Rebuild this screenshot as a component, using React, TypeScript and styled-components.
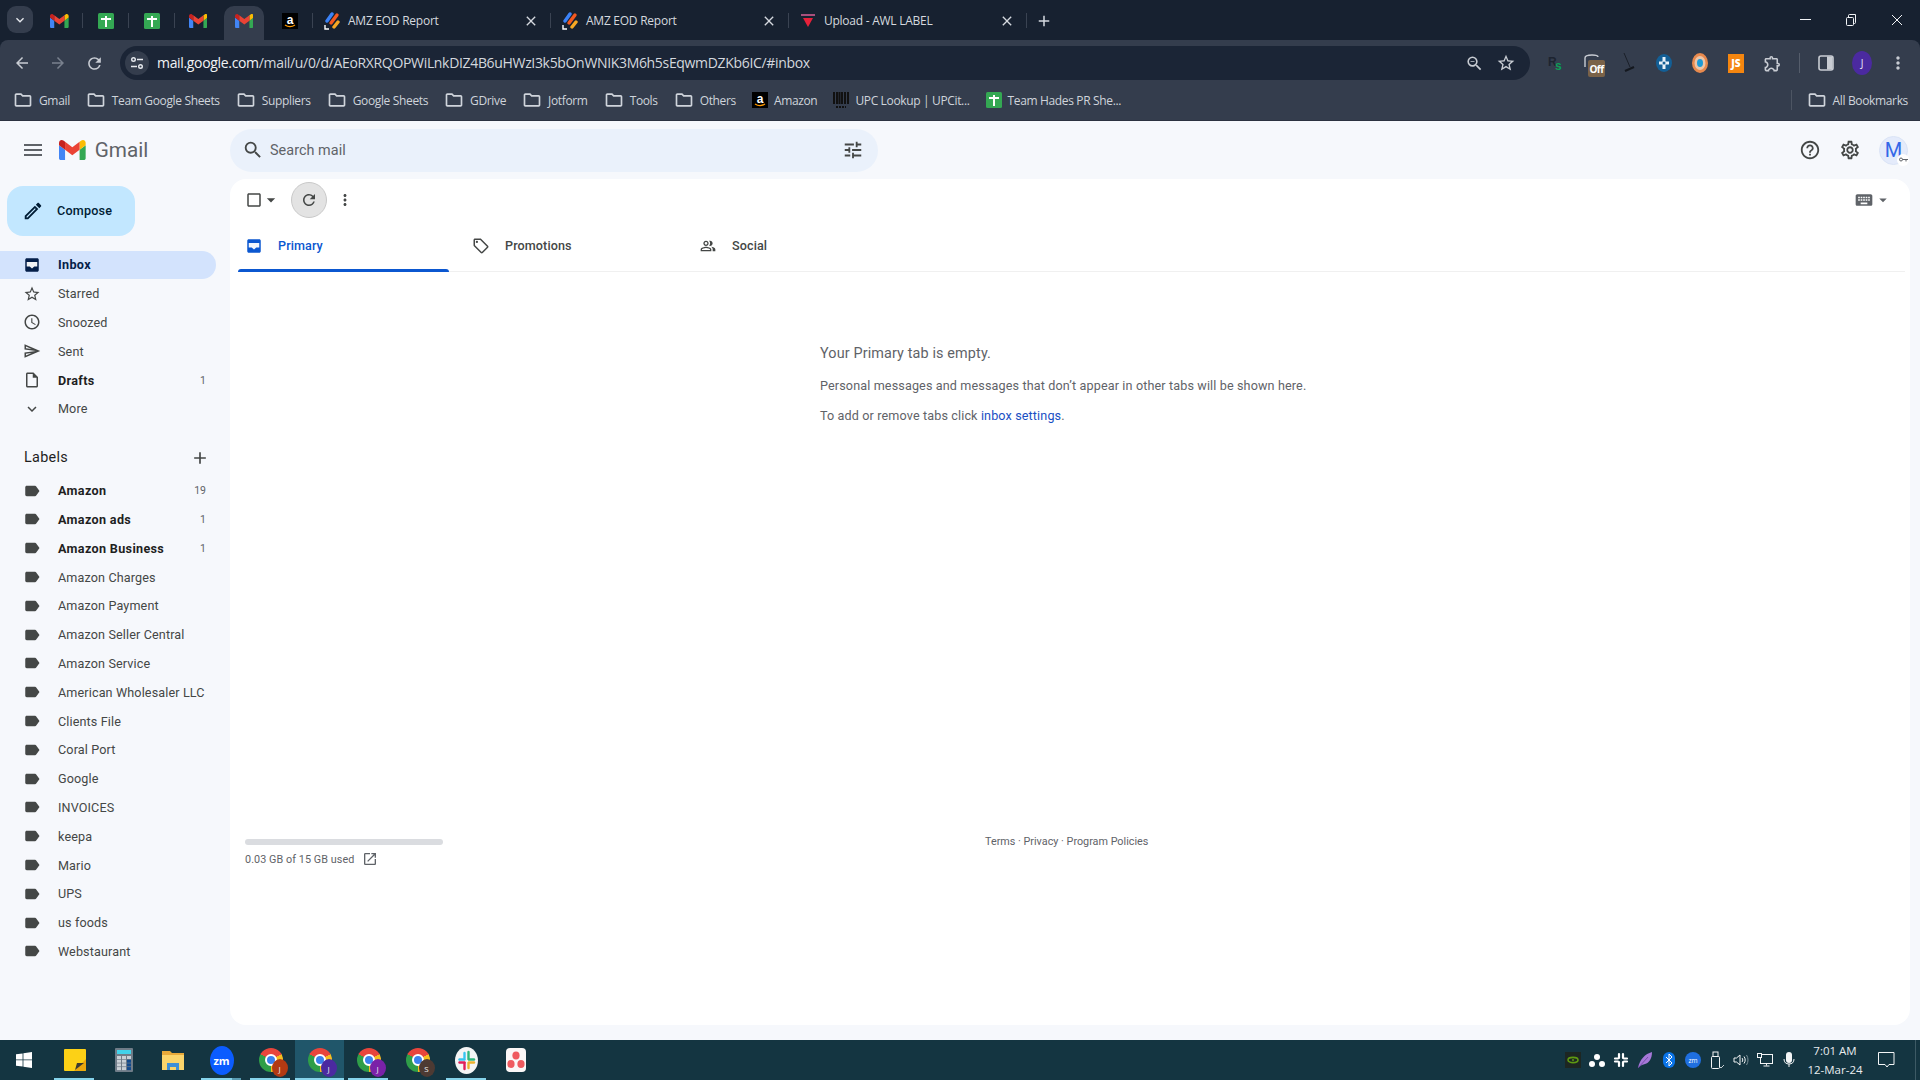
import styled, { createGlobalStyle } from 'styled-components'
import {
  MdAccessTime,
  MdAdd,
  MdArrowBack,
  MdArrowDropDown,
  MdArrowForward,
  MdCheckBoxOutlineBlank,
  MdClose,
  MdExpandMore,
  MdHelpOutline,
  MdKeyboard,
  MdLabel,
  MdMenu,
  MdMoreVert,
  MdOpenInNew,
  MdOutlineCreate,
  MdOutlineExtension,
  MdOutlineFolder,
  MdOutlineInsertDriveFile,
  MdOutlineLocalOffer,
  MdOutlinePeopleAlt,
  MdOutlineSend,
  MdOutlineSettings,
  MdRefresh,
  MdSearch,
  MdStarBorder,
  MdTune,
  MdZoomOut,
} from 'react-icons/md'

const GlobalStyle = createGlobalStyle`
  html, body {
    margin: 0;
    padding: 0;
    height: 100%;
    overflow: hidden;
    font-family: Roboto, "Liberation Sans", sans-serif;
  }
  * {
    box-sizing: border-box;
  }
`

const chromeFont = '"Open Sans", "Noto Sans", sans-serif'

const Page = styled.div`
  width: 1920px;
  height: 1080px;
  display: flex;
  flex-direction: column;
  background: #f6f8fc;
`

/* browser chrome */

const BrowserTop = styled.div`
  background: #172130;
  font-family: ${chromeFont};
`

const TabStrip = styled.div`
  height: 40px;
  display: flex;
  align-items: stretch;
`

const TabSearch = styled.div`
  width: 26px;
  height: 27px;
  margin: 6px 4px 0 7px;
  border-radius: 9px;
  background: #343d4d;
  color: #e6e9ee;
  display: flex;
  align-items: center;
  justify-content: center;
`

const PinnedTab = styled.div<{ $active?: boolean; $noSep?: boolean }>`
  position: relative;
  width: 46px;
  display: flex;
  align-items: center;
  justify-content: center;
  padding-top: 2px;
  border-right: ${({ $noSep }) => ($noSep ? 'none' : '1px solid #3a4352')};
  border-image: linear-gradient(transparent 33%, #3a4352 33%, #3a4352 70%, transparent 70%) 1;

  ${({ $active }) =>
    $active &&
    `
    &::before {
      content: '';
      position: absolute;
      left: 3px;
      right: 3px;
      top: 6px;
      bottom: 0;
      background: #343d4d;
      border-radius: 10px 10px 0 0;
    }
    > * { position: relative; }
  `}
`

const Tab = styled.div`
  width: 238px;
  display: flex;
  align-items: center;
  gap: 8px;
  padding: 1px 11px 0;
  font-size: 12px;
  letter-spacing: -0.25px;
  color: #d5d9df;
  border-right: 1px solid #3a4352;
  border-image: linear-gradient(transparent 33%, #3a4352 33%, #3a4352 70%, transparent 70%) 1;
`

const TabTitle = styled.span`
  flex: 1;
  white-space: nowrap;
`

const TabClose = styled.span`
  display: flex;
  color: #d5d9df;
`

const NewTab = styled.div`
  margin-left: 8px;
  display: flex;
  align-items: center;
  color: #d5d9df;
  padding-top: 1px;
`

const WindowControls = styled.div`
  margin-left: auto;
  display: flex;
  align-items: center;
  color: #f2f4f6;
`

const WindowButton = styled.div`
  width: 46px;
  height: 40px;
  display: flex;
  align-items: center;
  justify-content: center;
`

const Toolbar = styled.div`
  background: #343d4d;
  border-radius: 8px 8px 0 0;
`

const ToolbarRow = styled.div`
  height: 40px;
  padding: 6px 0 0 4px;
  display: flex;
  align-items: center;
`

const NavButton = styled.div<{ $dim?: boolean }>`
  width: 36px;
  display: flex;
  justify-content: center;
  color: ${({ $dim }) => ($dim ? '#79818e' : '#c8ccd3')};
`

const Omnibox = styled.div`
  width: 1410px;
  height: 34px;
  margin-left: 8px;
  padding: 0 14px 0 5px;
  border-radius: 17px;
  background: #1b2536;
  display: flex;
  align-items: center;
`

const SiteChip = styled.div`
  width: 24px;
  height: 24px;
  border-radius: 50%;
  background: #343d4d;
  color: #e6e9ee;
  display: flex;
  align-items: center;
  justify-content: center;
`

const UrlText = styled.div`
  margin: -1px 0 0 8px;
  font-size: 14px;
  letter-spacing: -0.33px;
  color: #f1f3f5;
  white-space: nowrap;

  span {
    color: #d4d8de;
  }
`

const OmniActions = styled.div`
  margin-left: auto;
  display: flex;
  align-items: center;
  gap: 12px;
  color: #c8ccd3;
`

const ExtensionRow = styled.div`
  margin-left: 8px;
  display: flex;
  align-items: center;
`

const ExtSlot = styled.div`
  position: relative;
  width: 36px;
  height: 24px;
  display: flex;
  align-items: center;
  justify-content: center;
  color: #c8ccd3;
`

const OffBadge = styled.span`
  position: absolute;
  left: 14px;
  top: 9px;
  width: 17px;
  height: 17px;
  border-radius: 2px;
  background: #7a6248;
  color: #fff;
  font-size: 10px;
  font-weight: 700;
  letter-spacing: -0.5px;
  display: flex;
  align-items: center;
  justify-content: center;
`

const JsBadge = styled.span`
  width: 16px;
  height: 19px;
  background: #f5860f;
  color: #fff;
  font-size: 10px;
  font-weight: 800;
  display: flex;
  align-items: center;
  justify-content: center;
`

const ToolbarSep = styled.div`
  width: 1px;
  height: 20px;
  margin: 0 8px 0 9px;
  background: #555d6b;
`

const ProfileChip = styled.div`
  width: 20px;
  height: 24px;
  border-radius: 50%;
  background: #4b2aa0;
  color: #e8e4f6;
  font-size: 10px;
  display: flex;
  align-items: center;
  justify-content: center;
`

const BookmarkBar = styled.div`
  height: 41px;
  padding: 0 12px 0 13px;
  display: flex;
  align-items: center;
  border-bottom: 1px solid #2b3240;
`

const Bookmark = styled.div`
  display: flex;
  align-items: center;
  gap: 6px;
  margin-right: 16px;
  font-size: 12px;
  letter-spacing: -0.35px;
  color: #cfd4db;
  white-space: nowrap;

  svg {
    flex: none;
  }
`

const BookmarkEnd = styled.div`
  margin-left: auto;
  padding-left: 15px;
  border-left: 1px solid #4d5563;
  height: 20px;
  display: flex;
  align-items: center;
  gap: 6px;
  font-size: 12px;
  letter-spacing: -0.35px;
  color: #cfd4db;
`

/* gmail */

const GmailBody = styled.div`
  flex: 1;
  min-height: 0;
  display: flex;
  flex-direction: column;
  background: #f6f8fc;
`

const GmailHeader = styled.header`
  height: 58px;
  flex: none;
  display: flex;
  align-items: center;
`

const Brand = styled.div`
  width: 230px;
  padding-left: 21px;
  display: flex;
  align-items: center;
  color: #5f6368;
`

const LogoWrap = styled.div`
  margin-left: 14px;
  display: flex;
`

const Wordmark = styled.span`
  margin-left: 9px;
  font-size: 20.7px;
  color: #5f6368;
`

const SearchBox = styled.div`
  width: 648px;
  height: 43px;
  padding: 0 14px 0 12px;
  border-radius: 22px;
  background: #eaf1fb;
  display: flex;
  align-items: center;
  color: #444746;
`

const SearchPlaceholder = styled.span`
  margin-left: 6px;
  font-size: 14.4px;
  letter-spacing: 0.05px;
  color: #5f6368;
  flex: 1;
`

const HeaderIcons = styled.div`
  margin-left: auto;
  padding-right: 12px;
  display: flex;
  align-items: center;
  color: #444746;
`

const HeaderIcon = styled.div`
  width: 40px;
  display: flex;
  justify-content: center;
`

const Account = styled.div`
  position: relative;
  width: 29px;
  height: 29px;
  margin-left: 9px;
  border-radius: 50%;
  background: #e4ebfb;
  border: 1px solid #dbe4f6;
  color: #3367e8;
  font-size: 20px;
  display: flex;
  align-items: center;
  justify-content: center;
`

const AccountKey = styled.span`
  position: absolute;
  right: -2px;
  bottom: -2px;
  width: 12px;
  height: 12px;
  border-radius: 50%;
  background: #fff;
  display: flex;
  align-items: center;
  justify-content: center;
`

const Content = styled.div`
  flex: 1;
  min-height: 0;
  display: flex;
`

const Sidebar = styled.nav`
  width: 230px;
  flex: none;
  display: flex;
  flex-direction: column;
`

const Compose = styled.div`
  width: 128px;
  height: 50px;
  margin: 7px 0 14.5px 7px;
  padding: 0 0 1px 15px;
  border-radius: 16px;
  background: #c2e7ff;
  color: #001d35;
  display: flex;
  align-items: center;
  gap: 13px;
  font-size: 12.6px;
  font-weight: 500;
  letter-spacing: 0.2px;
`

const NavRow = styled.div<{ $active?: boolean; $bold?: boolean }>`
  width: 216px;
  height: 28.8px;
  padding: 0 10px 0 23px;
  border-radius: 0 15px 15px 0;
  display: flex;
  align-items: center;
  font-size: 12.6px;
  color: ${({ $bold, $active }) => ($active ? '#041e49' : $bold ? '#1f1f1f' : '#444746')};
  font-weight: ${({ $bold, $active }) => ($bold || $active ? 700 : 400)};
  letter-spacing: ${({ $bold, $active }) => ($bold || $active ? 0.33 : 0.13)}px;
  background: ${({ $active }) => ($active ? '#d3e3fd' : 'transparent')};

  svg {
    flex: none;
    color: ${({ $active }) => ($active ? '#041e49' : '#444746')};
  }
`

const NavLabel = styled.span`
  margin-left: 17px;
  flex: 1;
  white-space: nowrap;
`

const NavCount = styled.span`
  font-size: 10.5px;
  font-weight: 400;
  letter-spacing: 0;
  color: #5f6368;
`

const LabelsHead = styled.div`
  height: 37px;
  margin-top: 16px;
  padding: 0 20px 0 24px;
  display: flex;
  align-items: center;
  justify-content: space-between;
  font-size: 14.4px;
  letter-spacing: 0.3px;
  color: #1f1f1f;
`

const Main = styled.main`
  flex: 1;
  margin: 0 10px 15px 0;
  border-radius: 16px;
  background: #fff;
  display: flex;
  flex-direction: column;
`

const ListBar = styled.div`
  height: 39px;
  padding: 3px 18px 0 15px;
  display: flex;
  align-items: center;
  color: #444746;
`

const Refresh = styled.div`
  width: 36px;
  height: 36px;
  margin: 0 9px 0 10px;
  border-radius: 50%;
  background: #e3e3e3;
  border: 1px solid #c9c9c9;
  display: flex;
  align-items: center;
  justify-content: center;
`

const Caret = styled.span`
  display: flex;
  margin-left: -2px;
`

const DotsButton = styled.span`
  display: flex;
`

const ListBarEnd = styled.div`
  margin-left: auto;
  display: flex;
  align-items: center;
  color: #5f6368;
`

const InboxTabs = styled.div`
  height: 54px;
  margin: 0 5px 0 8px;
  display: flex;
  border-bottom: 1px solid #f0f0f0;
`

const InboxTab = styled.div<{ $active?: boolean }>`
  position: relative;
  width: 211px;
  margin-right: 16px;
  padding: 2px 0 0 6px;
  display: flex;
  align-items: center;
  gap: 14px;
  font-size: 12.6px;
  font-weight: 500;
  letter-spacing: 0.1px;
  color: ${({ $active }) => ($active ? '#0b57d0' : '#444746')};

  &::after {
    content: '';
    display: ${({ $active }) => ($active ? 'block' : 'none')};
    position: absolute;
    left: 0;
    right: 0;
    bottom: -1px;
    height: 3px;
    background: #0b57d0;
    border-radius: 3px 3px 0 0;
  }
`

const InboxTabIcon = styled.span`
  width: 20px;
  display: flex;
  align-items: center;
  justify-content: center;
`

const EmptyState = styled.div`
  margin: 72px 0 0 590px;
  color: #5f6368;
  font-size: 12.6px;
  line-height: 18px;
  letter-spacing: 0.13px;
`

const EmptyTitle = styled.div`
  font-size: 14.4px;
  line-height: 20px;
`

const EmptyLine = styled.div`
  margin-top: 12.5px;

  a {
    color: #1a4fc4;
    text-decoration: none;
  }
`

const Footer = styled.footer`
  margin-top: auto;
  padding: 0 0 158px 15px;
  display: flex;
  align-items: flex-start;
`

const Storage = styled.div`
  width: 198px;
  font-size: 10.8px;
  letter-spacing: 0.07px;
  color: #5f6368;
`

const StorageBar = styled.div`
  height: 6px;
  border-radius: 3px;
  background: #dadce0;
`

const StorageText = styled.div`
  margin-top: 6px;
  display: flex;
  align-items: center;
  gap: 8px;
  color: #5f6368;
`

const FooterLinks = styled.div`
  margin: -4px 0 0 542px;
  font-size: 10.8px;
  color: #5f6368;
`

/* windows taskbar */

const Taskbar = styled.div`
  height: 40px;
  flex: none;
  background: #143541;
  display: flex;
  align-items: stretch;
  font-family: ${chromeFont};
`

const StartButton = styled.div`
  width: 40px;
  margin-right: 10px;
  padding-left: 8px;
  display: flex;
  align-items: center;
  justify-content: center;
`

const TaskCell = styled.div<{ $active?: boolean; $running?: boolean; $stacked?: boolean }>`
  position: relative;
  width: 49px;
  display: flex;
  align-items: center;
  justify-content: center;
  background: ${({ $active }) => ($active ? '#20566a' : 'transparent')};

  &::after {
    content: '';
    display: ${({ $running }) => ($running ? 'block' : 'none')};
    position: absolute;
    left: ${({ $active }) => ($active ? 0 : 4)}px;
    right: ${({ $active }) => ($active ? 0 : 5)}px;
    bottom: 0;
    height: 2px;
    background: ${({ $stacked }) =>
      $stacked ? 'linear-gradient(90deg, #86d3ea 78%, #5a9cb2 78%)' : '#86d3ea'};
  }
`

const ChromeBall = styled.div`
  position: relative;
  width: 24px;
  height: 24px;
  border-radius: 50%;
  background: conic-gradient(#e8453c 0 60deg, #f5bd1f 60deg 180deg, #2f9e48 180deg 300deg, #e8453c 300deg);

  &::after {
    content: '';
    position: absolute;
    inset: 6px;
    border-radius: 50%;
    background: #3b82ee;
    border: 2px solid #fff;
  }
`

const ProfileDot = styled.span<{ $color: string }>`
  position: absolute;
  z-index: 1;
  right: -5px;
  bottom: -5px;
  width: 16px;
  height: 18px;
  border-radius: 50%;
  background: ${({ $color }) => $color};
  color: #eee;
  font-size: 8px;
  display: flex;
  align-items: center;
  justify-content: center;
`

const ZoomApp = styled.div`
  width: 24px;
  height: 29px;
  border-radius: 50%;
  background: #0b5cff;
  color: #fff;
  font-size: 11px;
  font-weight: 700;
  display: flex;
  align-items: center;
  justify-content: center;
`

const Tray = styled.div`
  margin-left: auto;
  display: flex;
  align-items: center;
  color: #f3f5f6;
`

const TraySlot = styled.div`
  width: 24px;
  display: flex;
  align-items: center;
  justify-content: center;
`

const TrayZoom = styled.div`
  width: 16px;
  height: 16px;
  border-radius: 50%;
  background: #1f6fe0;
  color: #fff;
  font-size: 6.5px;
  display: flex;
  align-items: center;
  justify-content: center;
`

const Clock = styled.div`
  width: 68px;
  text-align: center;
  font-size: 11.5px;
  line-height: 19px;
  color: #e8ecee;
`

const NotifyButton = styled.div`
  width: 36px;
  display: flex;
  justify-content: center;
`

const ShowDesktop = styled.div`
  width: 15px;
  align-self: stretch;
  position: relative;

  &::after {
    content: '';
    position: absolute;
    right: 4px;
    top: 0;
    bottom: 0;
    width: 1px;
    background: #3d5a65;
  }
`

/* drawings */

const GmailLogo = ({ size = 14 }: { size?: number }) => (
  <svg width={size * (88 / 66)} height={size} viewBox="52 42 88 66">
    <path fill="#4285f4" d="M58 108h14V74L52 59v43c0 3.32 2.69 6 6 6" />
    <path fill="#34a853" d="M120 108h14c3.32 0 6-2.69 6-6V59l-20 15" />
    <path fill="#fbbc04" d="M120 48v26l20-15v-8c0-7.42-8.47-11.65-14.4-7.2" />
    <path fill="#ea4335" d="M72 74V48l24 18 24-18v26L96 92" />
    <path fill="#c5221f" d="M52 51v8l20 15V48l-5.6-4.2c-5.94-4.45-14.4-.22-14.4 7.2" />
  </svg>
)

const SheetIcon = () => (
  <svg width="16" height="16" viewBox="0 0 16 16">
    <rect width="16" height="16" rx="1.5" fill="#34a853" />
    <rect x="7" y="3" width="2" height="11" fill="#fff" />
    <rect x="3" y="5" width="10" height="2" fill="#fff" />
  </svg>
)

const AmazonIcon = () => (
  <svg width="16" height="16" viewBox="0 0 16 16">
    <rect width="16" height="16" fill="#000" />
    <text x="8" y="10.5" textAnchor="middle" fontSize="12" fontWeight="700" fontFamily="Liberation Sans" fill="#fff">
      a
    </text>
    <path d="M3 12c3 2 7 2 10 0" stroke="#f90" strokeWidth="1.3" fill="none" />
  </svg>
)

const AmzLogo = () => (
  <svg width="16" height="18" viewBox="0 0 16 18">
    <path d="M3 9 8 2" stroke="#3b82f6" strokeWidth="3.4" strokeLinecap="round" />
    <path d="M7 11 13 3" stroke="#f4581f" strokeWidth="3.4" strokeLinecap="round" />
    <path d="M10 15 14 10" stroke="#f7a823" strokeWidth="3.4" strokeLinecap="round" />
    <path d="M1 13v4h4" stroke="#fff" strokeWidth="1.4" fill="none" />
  </svg>
)

const UploadLogo = () => (
  <svg width="16" height="16" viewBox="0 0 16 16">
    <rect x="1" y="1" width="14" height="2" fill="#a8507c" />
    <path d="M3 5h10l-5 9z" fill="#e8213a" />
  </svg>
)

const BarcodeIcon = () => (
  <svg width="16" height="18" viewBox="0 0 16 18">
    <path d="M1 1v12M4 1v12M6.5 1v12M9 1v12M12 1v12M15 1v12" stroke="#111" strokeWidth="2" />
    <path d="M3 16h10" stroke="#111" strokeWidth="2" strokeDasharray="2 1" />
  </svg>
)

const InboxGlyph = ({ color }: { color: string }) => (
  <svg width="18" height="18" viewBox="0 0 24 24">
    <path
      fill={color}
      d="M19 3H5c-1.1 0-2 .9-2 2v14c0 1.1.9 2 2 2h14c1.1 0 2-.9 2-2V5c0-1.1-.9-2-2-2z"
    />
    <path fill="#fff" opacity="0.95" d="M5 8h14v6h-4l-3 2.500-3-2.500H5z" />
  </svg>
)

const RestoreIcon = () => (
  <svg width="12" height="12" viewBox="0 0 12 12" fill="none" stroke="#f2f4f6">
    <rect x="1.5" y="3.5" width="7" height="8" rx="1" />
    <path d="M3.5 3.5V1.5a1 1 0 0 1 1-1h6v8a1 1 0 0 1-1 1h-1" />
  </svg>
)

const SidePanelIcon = () => (
  <svg width="16" height="16" viewBox="0 0 16 16">
    <rect x="1" y="1" width="14" height="14" rx="2" fill="#343d4d" stroke="#c8ccd3" strokeWidth="1.6" />
    <rect x="9" y="1.5" width="5.5" height="13" fill="#c8ccd3" />
  </svg>
)

const RsIcon = () => (
  <svg width="18" height="16" viewBox="0 0 18 16">
    <text x="1" y="11" fontSize="12" fontWeight="700" fontFamily="Liberation Sans" fill="#1d2430">
      R
    </text>
    <text x="8" y="15" fontSize="12" fontWeight="700" fontFamily="Liberation Sans" fill="#0f9d58">
      s
    </text>
  </svg>
)

const PenIcon = () => (
  <svg width="14" height="22" viewBox="0 0 14 22">
    <path d="M3 1 9 15" stroke="#1a1f28" strokeWidth="1" />
    <path d="M4 19 13 15" stroke="#14181f" strokeWidth="2.2" />
  </svg>
)

const CrossBallIcon = () => (
  <svg width="16" height="18" viewBox="0 0 16 18">
    <ellipse cx="8" cy="9" rx="8" ry="9" fill="#135f96" />
    <path d="M8 3v12M3 9h10" stroke="#e8f2fa" strokeWidth="3" />
    <circle cx="8" cy="9" r="1.5" fill="#135f96" />
  </svg>
)

const OrangeBallIcon = () => (
  <svg width="16" height="20" viewBox="0 0 16 20">
    <ellipse cx="8" cy="10" rx="8" ry="10" fill="#e88a4e" />
    <ellipse cx="8" cy="10" rx="5.5" ry="7" fill="#ecc5a8" />
    <ellipse cx="8" cy="10" rx="3" ry="4" fill="#1c9ad6" />
  </svg>
)

const CloudOffIcon = () => (
  <svg width="18" height="20" viewBox="0 0 18 20" fill="none">
    <path d="M2 14V5c0-2 3-3 7-3s6 1 6 2" stroke="#c8ccd3" strokeWidth="1.4" />
  </svg>
)

const WindowsIcon = () => (
  <svg width="16" height="16" viewBox="0 0 16 16" fill="#fff">
    <path d="M0 2.3 6.6 1.4v6.1H0zM7.4 1.3 16 0v7.5H7.4zM0 8.3h6.6v6.2L0 13.7zM7.4 8.3H16V16l-8.6-1.2z" />
  </svg>
)

const StickyIcon = () => (
  <svg width="22" height="22" viewBox="0 0 22 22">
    <rect width="22" height="22" rx="1" fill="#fcd116" />
    <path d="M22 10v10a2 2 0 0 1-2 2H10z" fill="#eba80d" />
    <path d="M11 21l2-7h7z" fill="#3a3a32" />
  </svg>
)

const CalcIcon = () => (
  <svg width="18" height="24" viewBox="0 0 18 24">
    <rect width="18" height="24" rx="1" fill="#6f7c88" />
    <rect x="2" y="2" width="14" height="4" fill="#42d2ea" />
    {[0, 1, 2].map((c) =>
      [0, 1, 2, 3].map((r) => (
        <rect
          key={`${c}-${r}`}
          x={2 + c * 5}
          y={8 + r * 3.7}
          width="4"
          height="3"
          fill={c === 2 && r > 0 ? '#124a8c' : '#c9d0d6'}
        />
      )),
    )}
  </svg>
)

const ExplorerIcon = () => (
  <svg width="22" height="22" viewBox="0 0 22 22">
    <path d="M0 2h8l2 2h12v17H0z" fill="#e8a93a" />
    <rect y="6" width="22" height="15" fill="#fbd46b" />
    <path d="M5 21v-7h12v7h-3v-3H8v3z" fill="#3f8fd8" />
  </svg>
)

const SlackAppIcon = () => (
  <svg width="23" height="27" viewBox="0 0 23 27">
    <ellipse cx="11.5" cy="13.5" rx="11.500" ry="13.500" fill="#f4f5f5" />
    <g strokeWidth="2.400" strokeLinecap="round" fill="none">
      <path d="M9.500 6v5" stroke="#36c5f0" />
      <path d="M4.500 12.500h5" stroke="#36c5f0" />
      <path d="M13.500 5v7" stroke="#2eb67d" />
      <path d="M14 12.500h5" stroke="#2eb67d" />
      <path d="M13.500 16v5" stroke="#ecb22e" />
      <path d="M14 15.500h5" stroke="#ecb22e" />
      <path d="M9.500 16v6" stroke="#e01e5a" />
      <path d="M4.500 15.500h5" stroke="#e01e5a" />
    </g>
  </svg>
)

const AsanaIcon = () => (
  <svg width="20" height="24" viewBox="0 0 20 24">
    <rect width="20" height="24" rx="4" fill="#fbf7f7" />
    <ellipse cx="10" cy="7.5" rx="3.6" ry="4" fill="#ef5a5f" />
    <ellipse cx="5" cy="16" rx="3.6" ry="4" fill="#ef5a5f" />
    <ellipse cx="15" cy="16" rx="3.6" ry="4" fill="#ef5a5f" />
  </svg>
)

const NvidiaIcon = () => (
  <svg width="16" height="16" viewBox="0 0 16 16">
    <rect width="16" height="16" fill="#1d2622" />
    <ellipse cx="8" cy="8" rx="5" ry="2.600" fill="none" stroke="#5e9a12" strokeWidth="1.600" />
    <circle cx="8" cy="8" r="1" fill="#5e9a12" />
  </svg>
)

const ClusterIcon = () => (
  <svg width="16" height="14" viewBox="0 0 16 14" fill="#fff">
    <circle cx="8" cy="4" r="3" />
    <circle cx="3" cy="11" r="3" />
    <circle cx="13" cy="11" r="3" />
  </svg>
)

const SlackTrayIcon = () => (
  <svg width="16" height="16" viewBox="0 0 16 16" stroke="#fff" strokeWidth="2.200" strokeLinecap="round" fill="none">
    <path d="M6 2v4M2 6.5h3M10 2v4M11 6.5h3M10 10v4M11 9.5h3M6 10v4M2 9.5h3" />
  </svg>
)

const FeatherIcon = () => (
  <svg width="16" height="18" viewBox="0 0 16 18">
    <path d="M1 17C3 8 8 3 15 1c0 7-3 11-7 12-2 .5-4 1-7 4z" fill="#a678d8" />
    <path d="M1 17 11 6" stroke="#6a419c" strokeWidth="0.8" />
  </svg>
)

const BluetoothIcon = () => (
  <svg width="12" height="16" viewBox="0 0 12 16">
    <rect width="12" height="16" rx="6" fill="#0a74e8" />
    <path d="M3 5l6 6-3 3V2l3 3-6 6" fill="none" stroke="#fff" strokeWidth="1" />
  </svg>
)

const UsbIcon = () => (
  <svg width="14" height="18" viewBox="0 0 14 18" fill="none" stroke="#f3f5f6">
    <rect x="1.5" y="5.5" width="8" height="12" rx="1" />
    <rect x="3" y="1" width="5" height="4.5" />
    <path d="M9 15l2 2 3-3" strokeWidth="0.8" />
  </svg>
)

const VolumeIcon = () => (
  <svg width="16" height="14" viewBox="0 0 16 14" fill="none" stroke="#f3f5f6">
    <path d="M1 5h2.5L7 2v10L3.5 9H1z" />
    <path d="M9 5c1 1 1 3 0 4M11 3.5c1.6 2 1.6 5 0 7" />
    <path d="M13.5 2c2 3 2 7 0 10" stroke="#7d929a" />
  </svg>
)

const NetworkIcon = () => (
  <svg width="16" height="14" viewBox="0 0 16 14" fill="none" stroke="#f3f5f6">
    <rect x="3.5" y="1.5" width="12" height="9" />
    <path d="M9.5 10.5v2M6.5 13h6" />
    <rect x="0.5" y="0.5" width="4" height="4" fill="#143541" />
  </svg>
)

const MicIcon = () => (
  <svg width="12" height="16" viewBox="0 0 12 16" fill="#f3f5f6">
    <rect x="3" y="0" width="6" height="11" rx="3" />
    <path d="M1 7c0 3.5 2 5 5 5s5-1.500 5-5" fill="none" stroke="#f3f5f6" />
    <rect x="5.500" y="12" width="1" height="3" />
  </svg>
)

const BubbleIcon = () => (
  <svg width="18" height="16" viewBox="0 0 18 16" fill="none" stroke="#f3f5f6">
    <path d="M.5.5h15.500v12H11l-2 2.500-2-2.500H.5z" />
  </svg>
)

const KeyIcon = () => (
  <svg width="9" height="5" viewBox="0 0 9 5" fill="none" stroke="#5f6368">
    <circle cx="2" cy="2.500" r="1.500" />
    <path d="M3.500 2.500H9M7 2.500v2" />
  </svg>
)

const SiteTuneIcon = () => (
  <svg width="14" height="14" viewBox="0 0 14 14" fill="none" stroke="#e6e9ee" strokeWidth="1.400">
    <circle cx="3.500" cy="3.500" r="1.800" />
    <path d="M7 3.500h6M1 10.500h6" />
    <circle cx="10.500" cy="10.500" r="1.800" />
  </svg>
)

const bookmarks = ['Gmail', 'Team Google Sheets', 'Suppliers', 'Google Sheets', 'GDrive', 'Jotform', 'Tools', 'Others']

const labels = [
  { name: 'Amazon', count: 19 },
  { name: 'Amazon ads', count: 1 },
  { name: 'Amazon Business', count: 1 },
  { name: 'Amazon Charges' },
  { name: 'Amazon Payment' },
  { name: 'Amazon Seller Central' },
  { name: 'Amazon Service' },
  { name: 'American Wholesaler LLC' },
  { name: 'Clients File' },
  { name: 'Coral Port' },
  { name: 'Google' },
  { name: 'INVOICES' },
  { name: 'keepa' },
  { name: 'Mario' },
  { name: 'UPS' },
  { name: 'us foods' },
  { name: 'Webstaurant' },
]

const App = () => (
  <Page>
    <GlobalStyle />
    <BrowserTop>
      <TabStrip>
        <TabSearch>
          <MdExpandMore size={16} />
        </TabSearch>
        <PinnedTab>
          <GmailLogo />
        </PinnedTab>
        <PinnedTab>
          <SheetIcon />
        </PinnedTab>
        <PinnedTab>
          <SheetIcon />
        </PinnedTab>
        <PinnedTab $noSep>
          <GmailLogo />
        </PinnedTab>
        <PinnedTab $active $noSep>
          <GmailLogo />
        </PinnedTab>
        <PinnedTab>
          <AmazonIcon />
        </PinnedTab>
        <Tab>
          <AmzLogo />
          <TabTitle>AMZ EOD Report</TabTitle>
          <TabClose>
            <MdClose size={16} />
          </TabClose>
        </Tab>
        <Tab>
          <AmzLogo />
          <TabTitle>AMZ EOD Report</TabTitle>
          <TabClose>
            <MdClose size={16} />
          </TabClose>
        </Tab>
        <Tab>
          <UploadLogo />
          <TabTitle>Upload - AWL LABEL</TabTitle>
          <TabClose>
            <MdClose size={16} />
          </TabClose>
        </Tab>
        <NewTab>
          <MdAdd size={18} />
        </NewTab>
        <WindowControls>
          <WindowButton>
            <svg width="11" height="2" viewBox="0 0 11 2">
              <rect width="11" height="1" fill="#f2f4f6" />
            </svg>
          </WindowButton>
          <WindowButton>
            <RestoreIcon />
          </WindowButton>
          <WindowButton>
            <svg width="12" height="12" viewBox="0 0 12 12" stroke="#f2f4f6">
              <path d="M1 1l10 10M11 1 1 11" />
            </svg>
          </WindowButton>
        </WindowControls>
      </TabStrip>
      <Toolbar>
        <ToolbarRow>
          <NavButton>
            <MdArrowBack size={18} />
          </NavButton>
          <NavButton $dim>
            <MdArrowForward size={18} />
          </NavButton>
          <NavButton>
            <MdRefresh size={19} />
          </NavButton>
          <Omnibox>
            <SiteChip>
              <SiteTuneIcon />
            </SiteChip>
            <UrlText>
              mail.google.com<span>/mail/u/0/d/AEoRXRQOPWiLnkDIZ4B6uHWzI3k5bOnWNIK3M6h5sEqwmDZKb6IC/#inbox</span>
            </UrlText>
            <OmniActions>
              <MdZoomOut size={19} />
              <MdStarBorder size={20} />
            </OmniActions>
          </Omnibox>
          <ExtensionRow>
            <ExtSlot>
              <RsIcon />
            </ExtSlot>
            <ExtSlot>
              <CloudOffIcon />
              <OffBadge>Off</OffBadge>
            </ExtSlot>
            <ExtSlot>
              <PenIcon />
            </ExtSlot>
            <ExtSlot>
              <CrossBallIcon />
            </ExtSlot>
            <ExtSlot>
              <OrangeBallIcon />
            </ExtSlot>
            <ExtSlot>
              <JsBadge>JS</JsBadge>
            </ExtSlot>
            <ExtSlot>
              <MdOutlineExtension size={19} />
            </ExtSlot>
            <ToolbarSep />
            <ExtSlot>
              <SidePanelIcon />
            </ExtSlot>
            <ExtSlot>
              <ProfileChip>J</ProfileChip>
            </ExtSlot>
            <ExtSlot>
              <MdMoreVert size={20} />
            </ExtSlot>
          </ExtensionRow>
        </ToolbarRow>
        <BookmarkBar>
          {bookmarks.map((name) => (
            <Bookmark key={name}>
              <MdOutlineFolder size={20} />
              {name}
            </Bookmark>
          ))}
          <Bookmark>
            <AmazonIcon />
            Amazon
          </Bookmark>
          <Bookmark>
            <BarcodeIcon />
            UPC Lookup | UPCit...
          </Bookmark>
          <Bookmark>
            <SheetIcon />
            Team Hades PR She...
          </Bookmark>
          <BookmarkEnd>
            <MdOutlineFolder size={20} />
            All Bookmarks
          </BookmarkEnd>
        </BookmarkBar>
      </Toolbar>
    </BrowserTop>

    <GmailBody>
      <GmailHeader>
        <Brand>
          <MdMenu size={24} />
          <LogoWrap>
            <GmailLogo size={20} />
          </LogoWrap>
          <Wordmark>Gmail</Wordmark>
        </Brand>
        <SearchBox>
          <MdSearch size={22} />
          <SearchPlaceholder>Search mail</SearchPlaceholder>
          <MdTune size={22} />
        </SearchBox>
        <HeaderIcons>
          <HeaderIcon>
            <MdHelpOutline size={22} />
          </HeaderIcon>
          <HeaderIcon>
            <MdOutlineSettings size={22} />
          </HeaderIcon>
          <Account>
            M
            <AccountKey>
              <KeyIcon />
            </AccountKey>
          </Account>
        </HeaderIcons>
      </GmailHeader>
      <Content>
        <Sidebar>
          <Compose>
            <MdOutlineCreate size={22} />
            Compose
          </Compose>
          <NavRow $active>
            <InboxGlyph color="#041e49" />
            <NavLabel>Inbox</NavLabel>
          </NavRow>
          <NavRow>
            <MdStarBorder size={18} />
            <NavLabel>Starred</NavLabel>
          </NavRow>
          <NavRow>
            <MdAccessTime size={18} />
            <NavLabel>Snoozed</NavLabel>
          </NavRow>
          <NavRow>
            <MdOutlineSend size={18} />
            <NavLabel>Sent</NavLabel>
          </NavRow>
          <NavRow $bold>
            <MdOutlineInsertDriveFile size={18} />
            <NavLabel>Drafts</NavLabel>
            <NavCount>1</NavCount>
          </NavRow>
          <NavRow>
            <MdExpandMore size={18} />
            <NavLabel>More</NavLabel>
          </NavRow>
          <LabelsHead>
            Labels
            <MdAdd size={20} color="#444746" />
          </LabelsHead>
          {labels.map((label) => (
            <NavRow key={label.name} $bold={!!label.count}>
              <MdLabel size={18} />
              <NavLabel>{label.name}</NavLabel>
              {label.count && <NavCount>{label.count}</NavCount>}
            </NavRow>
          ))}
        </Sidebar>
        <Main>
          <ListBar>
            <MdCheckBoxOutlineBlank size={18} />
            <Caret>
              <MdArrowDropDown size={20} />
            </Caret>
            <Refresh>
              <MdRefresh size={18} />
            </Refresh>
            <DotsButton>
              <MdMoreVert size={18} />
            </DotsButton>
            <ListBarEnd>
              <MdKeyboard size={20} />
              <MdArrowDropDown size={18} />
            </ListBarEnd>
          </ListBar>
          <InboxTabs>
            <InboxTab $active>
              <InboxTabIcon>
                <InboxGlyph color="#0b57d0" />
              </InboxTabIcon>
              Primary
            </InboxTab>
            <InboxTab>
              <InboxTabIcon>
                <MdOutlineLocalOffer size={18} />
              </InboxTabIcon>
              Promotions
            </InboxTab>
            <InboxTab>
              <InboxTabIcon>
                <MdOutlinePeopleAlt size={16} />
              </InboxTabIcon>
              Social
            </InboxTab>
          </InboxTabs>
          <EmptyState>
            <EmptyTitle>Your Primary tab is empty.</EmptyTitle>
            <EmptyLine>Personal messages and messages that don’t appear in other tabs will be shown here.</EmptyLine>
            <EmptyLine>
              To add or remove tabs click <a href="#settings">inbox settings</a>.
            </EmptyLine>
          </EmptyState>
          <Footer>
            <Storage>
              <StorageBar />
              <StorageText>
                0.03 GB of 15 GB used
                <MdOpenInNew size={16} />
              </StorageText>
            </Storage>
            <FooterLinks>Terms · Privacy · Program Policies</FooterLinks>
          </Footer>
        </Main>
      </Content>
    </GmailBody>

    <Taskbar>
      <StartButton>
        <WindowsIcon />
      </StartButton>
      <TaskCell $running>
        <StickyIcon />
      </TaskCell>
      <TaskCell>
        <CalcIcon />
      </TaskCell>
      <TaskCell>
        <ExplorerIcon />
      </TaskCell>
      <TaskCell $running $stacked>
        <ZoomApp>zm</ZoomApp>
      </TaskCell>
      <TaskCell $running>
        <ChromeBall>
          <ProfileDot $color="#b23a12">J</ProfileDot>
        </ChromeBall>
      </TaskCell>
      <TaskCell $active $running>
        <ChromeBall>
          <ProfileDot $color="#4b2aa0">J</ProfileDot>
        </ChromeBall>
      </TaskCell>
      <TaskCell $running>
        <ChromeBall>
          <ProfileDot $color="#7a22a8">J</ProfileDot>
        </ChromeBall>
      </TaskCell>
      <TaskCell>
        <ChromeBall>
          <ProfileDot $color="#4d3a33">S</ProfileDot>
        </ChromeBall>
      </TaskCell>
      <TaskCell $running>
        <SlackAppIcon />
      </TaskCell>
      <TaskCell>
        <AsanaIcon />
      </TaskCell>
      <Tray>
        <TraySlot>
          <NvidiaIcon />
        </TraySlot>
        <TraySlot>
          <ClusterIcon />
        </TraySlot>
        <TraySlot>
          <SlackTrayIcon />
        </TraySlot>
        <TraySlot>
          <FeatherIcon />
        </TraySlot>
        <TraySlot>
          <BluetoothIcon />
        </TraySlot>
        <TraySlot>
          <TrayZoom>zm</TrayZoom>
        </TraySlot>
        <TraySlot>
          <UsbIcon />
        </TraySlot>
        <TraySlot>
          <VolumeIcon />
        </TraySlot>
        <TraySlot>
          <NetworkIcon />
        </TraySlot>
        <TraySlot>
          <MicIcon />
        </TraySlot>
        <Clock>
          7:01 AM
          <br />
          12-Mar-24
        </Clock>
        <NotifyButton>
          <BubbleIcon />
        </NotifyButton>
        <ShowDesktop />
      </Tray>
    </Taskbar>
  </Page>
)

export default App
